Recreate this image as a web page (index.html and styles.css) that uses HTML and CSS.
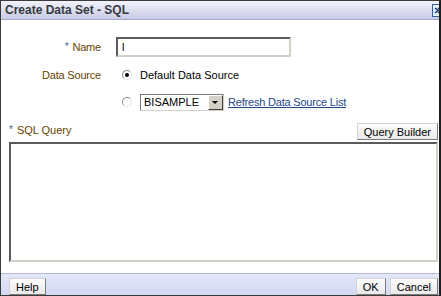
FILE: index.html
```html
<!DOCTYPE html>
<html lang="en">
<head>
    <meta charset="UTF-8">
    <meta name="viewport" content="width=device-width, initial-scale=1.0">
    <title>Create Data Set - SQL</title>
    <link rel="stylesheet" href="styles.css">
</head>
<body>
    <div class="dialog">
        <!-- 타이틀 바 -->
        <div class="title-bar">
            <span class="title">Create Data Set - SQL</span>
            <span class="close-btn">
                <svg width="11" height="13" viewBox="0 0 11 13">
                    <rect x="0.5" y="0.5" width="10" height="12" fill="#e8f0fb" stroke="#2f5f9f"/>
                    <path d="M3 4 L6 6.5 L3 9" fill="none" stroke="#1d3f7a" stroke-width="1.6"/>
                    <path d="M6 4 L9 6.5 L6 9" fill="none" stroke="#1d3f7a" stroke-width="1.6"/>
                </svg>
            </span>
        </div>

        <div class="dialog-body">
            <div class="form-grid">
                <label class="field-label"><span class="req">*</span><span>Name</span></label>
                <div class="field"><input class="text-input" type="text" value="l"></div>

                <div class="field-label">Data Source</div>
                <div class="field">
                    <span class="radio checked"></span>
                    <span class="radio-text">Default Data Source</span>
                </div>

                <div></div>
                <div class="field">
                    <span class="radio"></span>
                    <span class="select-box">
                        <span class="select-value">BISAMPLE</span>
                        <span class="select-arrow"></span>
                    </span>
                    <a href="#" class="link">Refresh Data Source List</a>
                </div>
            </div>

            <div class="query-head">
                <span class="query-label"><span class="req">*</span>SQL Query</span>
                <button class="btn">Query Builder</button>
            </div>
            <div class="query-area"></div>
        </div>

        <!-- 하단 버튼 -->
        <div class="footer">
            <button class="btn">Help</button>
            <div class="footer-right">
                <button class="btn btn-ok">OK</button>
                <button class="btn">Cancel</button>
            </div>
        </div>
    </div>
</body>
</html>
```

FILE: styles.css
```css
* {
    box-sizing: border-box;
}

body {
    margin: 0;
    font-family: "Liberation Sans", Arial, sans-serif;
    font-size: 11px;
    color: #000;
    background-color: #fff;
}

.dialog {
    width: 441px;
    height: 296px;
    display: flex;
    flex-direction: column;
    border-top: 1px solid #3a3a3a;
    border-left: 1px solid #3a3a3a;
    border-right: 2px solid #1e1e1e;
    border-bottom: 1px solid #3a3a3a;
    background-color: #fff;
}

/* 타이틀 바 */
.title-bar {
    position: relative;
    height: 19px;
    display: flex;
    align-items: center;
    padding-left: 4px;
    background: linear-gradient(#f1f2fa, #c9cce6);
    border-bottom: 1px solid #a4a7cc;
    overflow: hidden;
}

.title {
    font-size: 12px;
    font-weight: bold;
    color: #363a40;
}

.close-btn {
    position: absolute;
    right: -4px;
    top: 3px;
    line-height: 0;
}

/* 본문 */
.dialog-body {
    flex: 1;
    padding: 17px 1px 0 8px;
}

.form-grid {
    display: grid;
    grid-template-columns: 92px 1fr;
    grid-template-rows: 20px 18px 18px;
    column-gap: 15px;
    row-gap: 9px;
}

.field-label {
    display: flex;
    align-items: center;
    justify-content: flex-end;
    color: #664400;
    letter-spacing: -0.2px;
}

.req {
    color: #33669a;
    margin-right: 4px;
    font-size: 10px;
    position: relative;
    top: -1px;
}

.field {
    display: flex;
    align-items: center;
}

.text-input {
    width: 175px;
    height: 20px;
    padding: 0 4px;
    font-family: inherit;
    font-size: 11px;
    border: 2px solid;
    border-color: #5a5a5a #d4d0c8 #d4d0c8 #5a5a5a;
    outline: none;
}

.radio {
    width: 10px;
    height: 10px;
    margin: 0 8px 0 6px;
    border-radius: 50%;
    border: 1px solid;
    border-color: #8a8a8a #e0e0e0 #e0e0e0 #8a8a8a;
    background-color: #fff;
    position: relative;
}

.radio.checked::after {
    content: "";
    position: absolute;
    left: 2px;
    top: 2px;
    width: 4px;
    height: 4px;
    border-radius: 50%;
    background-color: #000;
}

.select-box {
    display: flex;
    align-items: center;
    width: 84px;
    height: 17px;
    border: 1px solid;
    border-color: #7a7a7a #d4d0c8 #d4d0c8 #7a7a7a;
}

.select-value {
    flex: 1;
    padding-left: 3px;
    font-size: 11px;
}

.select-arrow {
    width: 15px;
    height: 15px;
    background-color: #d4d0c8;
    border: 1px solid;
    border-color: #fff #404040 #404040 #fff;
    position: relative;
}

.select-arrow::after {
    content: "";
    position: absolute;
    left: 3px;
    top: 5px;
    border-left: 3px solid transparent;
    border-right: 3px solid transparent;
    border-top: 3px solid #000;
}

.link {
    margin-left: 4px;
    color: #22478a;
    letter-spacing: -0.2px;
}

/* SQL 쿼리 */
.query-head {
    display: flex;
    justify-content: space-between;
    align-items: flex-start;
    margin-top: 12px;
    height: 19px;
}

.query-label {
    color: #664400;
    padding-top: 1px;
}

.query-area {
    height: 120px;
    border: 2px solid;
    border-color: #5a5a5a #d4d0c8 #d4d0c8 #5a5a5a;
    background-color: #fff;
}

/* 버튼 */
.btn {
    height: 17px;
    padding: 0 6px;
    font-family: inherit;
    font-size: 11px;
    color: #000;
    background: linear-gradient(#fdfdfd, #e9e9e9);
    border: 1px solid;
    border-color: #d4d4d4 #7a7a7a #7a7a7a #d4d4d4;
    cursor: pointer;
}

.btn-ok {
    min-width: 30px;
}

/* 하단 */
.footer {
    height: 22px;
    display: flex;
    justify-content: space-between;
    align-items: flex-start;
    padding: 4px 1px 0 8px;
    background: linear-gradient(#e3e8fb, #d2d9f1);
    border-top: 1px solid #b3b7d8;
}

.footer-right {
    display: flex;
    gap: 4px;
}
```
